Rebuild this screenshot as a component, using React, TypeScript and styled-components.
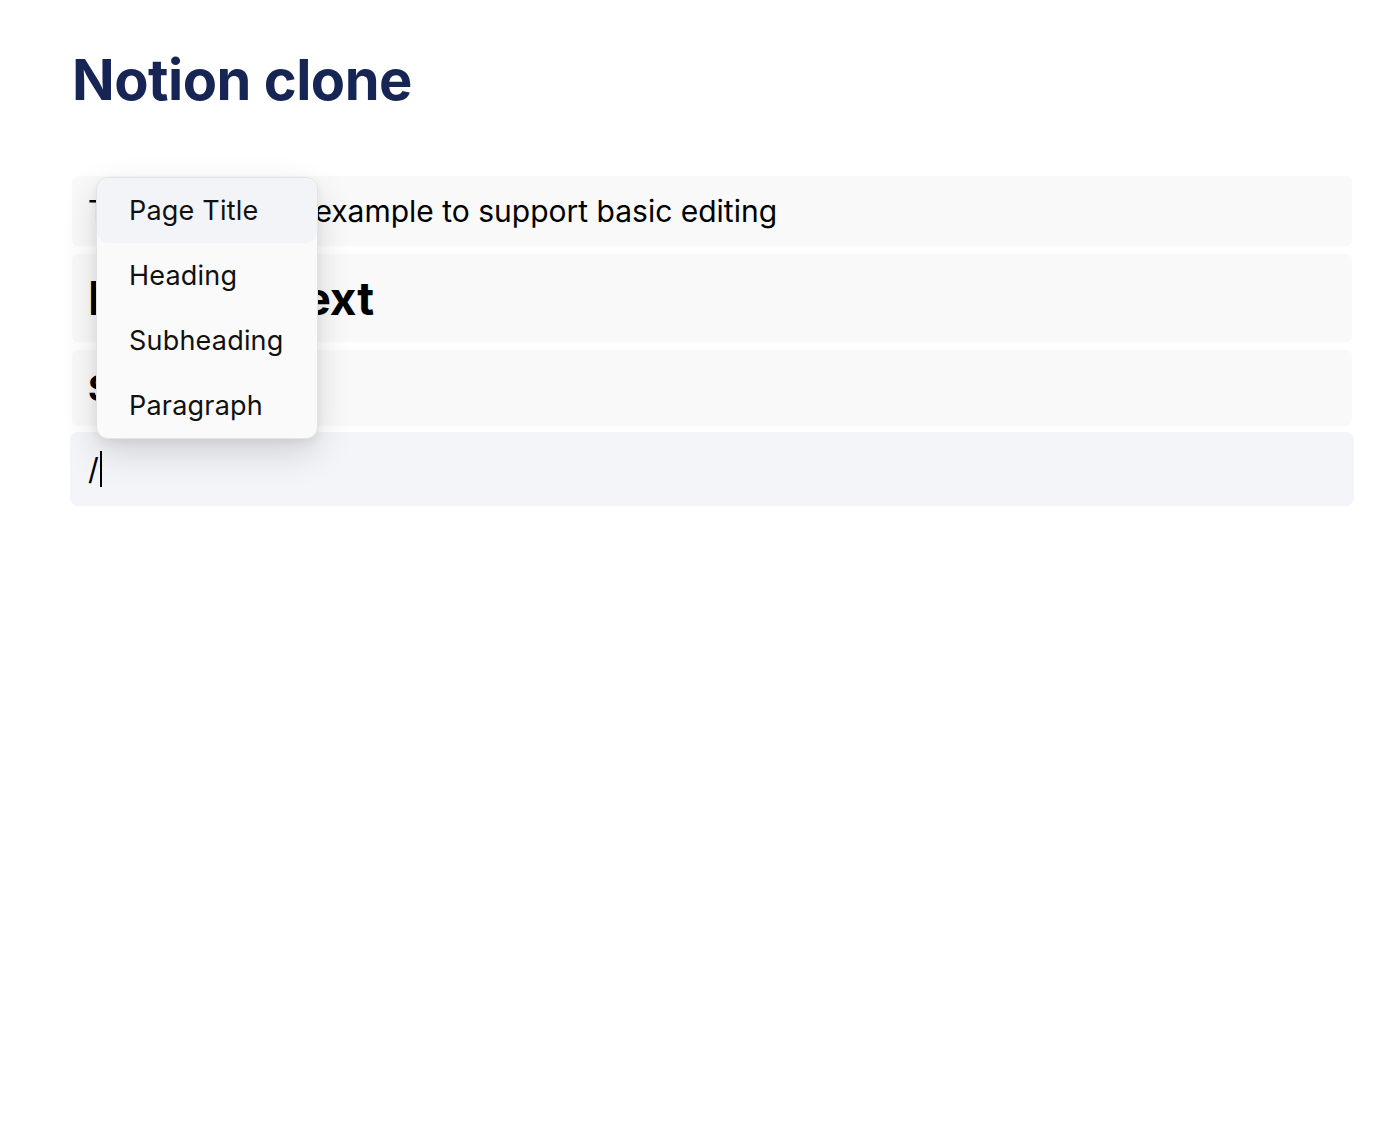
import React from "react";
import styled, {createGlobalStyle} from "styled-components";

const GlobalStyle = createGlobalStyle`
    html, body {
        margin: 0;
        padding: 0;
        background: #ffffff;
        font-family: Inter, "Noto Sans", sans-serif;
        color: #000000;
    }
`;

type BlockKind = 'paragraph' | 'heading' | 'subheading';
type Block = { id: number, kind: BlockKind, text: string };

const blocks: Block[] = [
    {id: 1, kind: 'paragraph', text: 'This is a simple example to support basic editing'},
    {id: 2, kind: 'heading', text: 'Heading text'},
    {id: 3, kind: 'subheading', text: 'Subheading'},
];

const menuItems = ['Page Title', 'Heading', 'Subheading', 'Paragraph'];

const sizes: Record<BlockKind, { size: number, line: number, weight: number }> = {
    paragraph: {size: 30, line: 42, weight: 400},
    heading: {size: 46, line: 60, weight: 700},
    subheading: {size: 36, line: 48, weight: 700},
};

const Page = styled.main`
    padding: 0 48px 0 72px;
`;

const Title = styled.h1`
    margin: 0;
    padding-top: 44px;
    font-size: 56px;
    line-height: 72px;
    font-weight: 700;
    color: #172554;
    letter-spacing: -0.5px;
`;

const Editor = styled.div`
    position: relative;
    margin-top: 60px;
    display: flex;
    flex-direction: column;
    gap: 8px;
`;

const Row = styled.div<{ kind: BlockKind }>`
    background: #f9f9f9;
    border-radius: 6px;
    padding: 14px 16px;
    font-size: ${props => sizes[props.kind].size}px;
    font-weight: ${props => sizes[props.kind].weight};
    line-height: ${props => sizes[props.kind].line}px;
    white-space: nowrap;
`;

const ActiveRow = styled.div`
    background: #f4f5f9;
    border-radius: 8px;
    margin: -2px -2px 0;
    padding: 16px 18px;
    font-size: 30px;
    line-height: 42px;
    display: flex;
    align-items: center;
`;

const Caret = styled.span`
    display: inline-block;
    width: 2px;
    height: 36px;
    margin-left: 1px;
    background: #000000;
`;

const Menu = styled.ul`
    position: absolute;
    left: 24px;
    top: 1px;
    width: 222px;
    margin: 0;
    padding: 0;
    list-style: none;
    box-sizing: border-box;
    background: #fafafa;
    border: 1px solid #e3e3e3;
    border-radius: 12px;
    box-shadow: 0 14px 36px rgba(0, 0, 0, 0.14), 0 4px 10px rgba(0, 0, 0, 0.06);
    overflow: hidden;
`;

const MenuItem = styled.li<{ active?: boolean }>`
    height: 65px;
    display: flex;
    align-items: center;
    padding-left: 32px;
    font-size: 27px;
    letter-spacing: 0.2px;
    color: #111111;
    background: ${props => props.active ? '#f3f4f8' : 'transparent'};
    border-radius: 12px;
`;

export default function App() {
    return <>
        <GlobalStyle/>
        <Page>
            <Title>Notion clone</Title>
            <Editor>
                {blocks.map(block => <Row key={block.id} kind={block.kind}>{block.text}</Row>)}
                <ActiveRow>/<Caret/></ActiveRow>
                <Menu>
                    {menuItems.map((item, idx) => <MenuItem key={item} active={idx === 0}>{item}</MenuItem>)}
                </Menu>
            </Editor>
        </Page>
    </>;
}
